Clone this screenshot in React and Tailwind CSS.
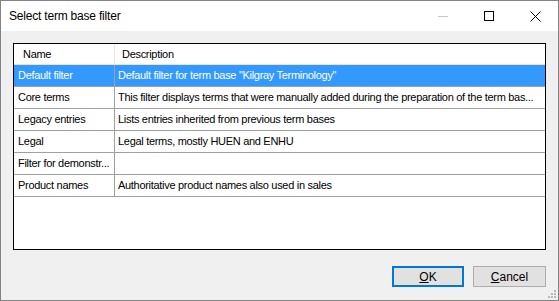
const ROWS = [
  { name: "Default filter", desc: 'Default filter for term base "Kilgray Terminology"', selected: true },
  { name: "Core terms", desc: "This filter displays terms that were manually added during the preparation of the term bas..." },
  { name: "Legacy entries", desc: "Lists entries inherited from previous term bases" },
  { name: "Legal", desc: "Legal terms, mostly HUEN and ENHU" },
  { name: "Filter for demonstr...", desc: "" },
  { name: "Product names", desc: "Authoritative product names also used in sales" },
];

function TitleButtons() {
  return (
    <div className="flex h-full">
      <div className="flex h-full w-[46px] items-center justify-center">
        <svg width="10" height="10" viewBox="0 0 10 10">
          <line x1="0" y1="5.5" x2="10" y2="5.5" stroke="#c8c8c8" strokeWidth="1" />
        </svg>
      </div>
      <div className="flex h-full w-[46px] items-center justify-center">
        <svg width="10" height="10" viewBox="0 0 10 10">
          <rect x="0.5" y="0.5" width="9" height="9" fill="none" stroke="#000" strokeWidth="1" />
        </svg>
      </div>
      <div className="flex h-full w-[46px] items-center justify-center">
        <svg width="11" height="11" viewBox="0 0 11 11">
          <path d="M0.5 0.5 L10.5 10.5 M10.5 0.5 L0.5 10.5" stroke="#000" strokeWidth="1" fill="none" />
        </svg>
      </div>
    </div>
  );
}

function Row({ name, desc, selected }) {
  return (
    <div
      className={
        "flex h-[22px] border-b border-[#a0a0a0] " +
        (selected ? "bg-[#3399ff] text-white" : "text-black")
      }
    >
      <div className="flex w-[101px] shrink-0 items-center overflow-hidden whitespace-nowrap border-r border-[#a0a0a0] pl-1">
        {name}
      </div>
      <div className="flex flex-1 items-center overflow-hidden whitespace-nowrap pl-[3px]">{desc}</div>
    </div>
  );
}

export default function App() {
  return (
    <div
      className="relative flex h-[301px] w-[559px] flex-col border border-[#838383] bg-[#f0f0f0] text-[11px] tracking-[-0.3px] text-black"
      style={{ fontFamily: '"Liberation Sans", Arial, sans-serif' }}
    >
      {/* Title bar */}
      <div className="flex h-[30px] shrink-0 items-center justify-between bg-white">
        <span className="pl-2 text-[12px] tracking-[-0.2px] text-black">Select term base filter</span>
        <TitleButtons />
      </div>

      {/* Body */}
      <div className="flex flex-1 flex-col px-3 pt-3">
        <div className="flex h-[207px] flex-col border border-black bg-white">
          <div className="flex h-[21px] border-b border-[#e5e5e5]">
            <div className="flex w-[101px] shrink-0 items-center border-r border-[#e5e5e5] pl-[9px]">Name</div>
            <div className="flex flex-1 items-center pl-[7px]">Description</div>
          </div>
          {ROWS.map((r) => (
            <Row key={r.name} {...r} />
          ))}
        </div>

        <div className="mt-4 flex justify-end gap-[9px]">
          <button className="h-[21px] w-[72px] border-2 border-[#0078d7] bg-[#e1e1e1] text-[12px] tracking-normal">
            <span className="underline">O</span>K
          </button>
          <button className="h-[21px] w-[73px] border border-[#adadad] bg-[#e1e1e1] text-[12px] tracking-normal">
            <span className="underline">C</span>ancel
          </button>
        </div>
      </div>

      {/* Resize grip */}
      <svg className="absolute bottom-[1px] right-[1px]" width="10" height="10" viewBox="0 0 10 10">
        <rect x="7" y="1" width="2" height="2" fill="#b9b9b9" />
        <rect x="4" y="4" width="2" height="2" fill="#b9b9b9" />
        <rect x="7" y="4" width="2" height="2" fill="#b9b9b9" />
        <rect x="1" y="7" width="2" height="2" fill="#b9b9b9" />
        <rect x="4" y="7" width="2" height="2" fill="#b9b9b9" />
        <rect x="7" y="7" width="2" height="2" fill="#b9b9b9" />
      </svg>
    </div>
  );
}
